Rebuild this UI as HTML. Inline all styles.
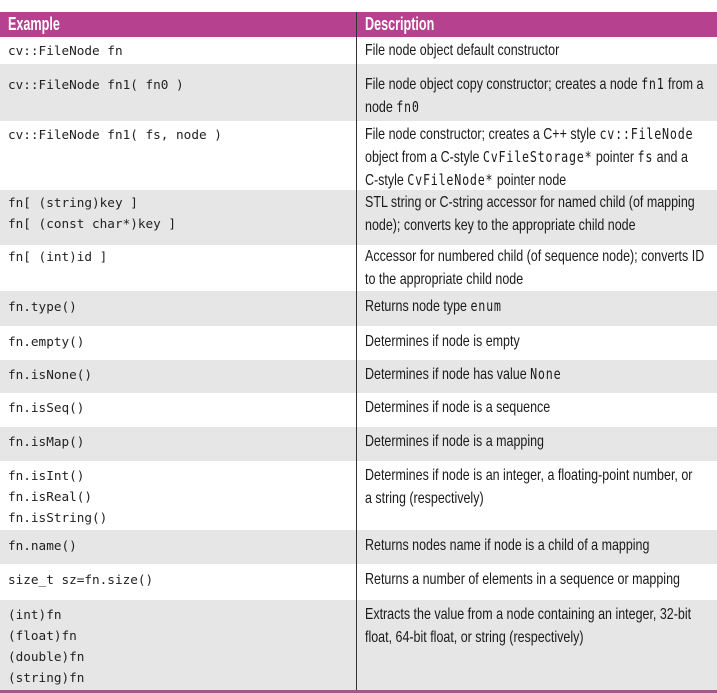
<!DOCTYPE html><html><head><style>
body{margin:0;width:717px;height:693px;position:relative;overflow:hidden;background:#fff;font-family:"Liberation Sans",sans-serif;color:#222}
.r{position:absolute;left:0;width:717px}
.g{background:#e6e6e6}
.c{position:absolute;left:8px;font-family:"DejaVu Sans Mono","Liberation Mono",monospace;font-size:12.7px;line-height:21px;white-space:pre;color:#222}
.d{position:absolute;left:365px;font-size:16px;line-height:23px;white-space:pre;transform:scaleX(0.78);transform-origin:0 0;color:#1a1a1a}
.d code{font-family:"DejaVu Sans Mono",monospace;font-size:15px;letter-spacing:1px}
.h{background:#b5418f;top:12px;height:25px;color:#fff;font-weight:bold}
.h span{position:absolute;top:2px;font-size:18px;transform:scaleX(0.7);transform-origin:0 0}
#v{position:absolute;left:356px;top:12px;width:1px;height:678px;background:#333}
</style></head><body>
<div class="r h"><span style="left:8px">Example</span><span style="left:365px">Description</span></div>
<div class="r" style="top:37px;height:27px"><div class="c" style="top:3px">cv::FileNode fn</div><div class="d" style="top:2px">File node object default constructor</div></div>
<div class="r g" style="top:64px;height:57px"><div class="c" style="top:10px">cv::FileNode fn1( fn0 )</div><div class="d" style="top:9px">File node object copy constructor; creates a node <code>fn1</code> from a
node <code>fn0</code></div></div>
<div class="r" style="top:121px;height:69px"><div class="c" style="top:3px">cv::FileNode fn1( fs, node )</div><div class="d" style="top:2px">File node constructor; creates a C++ style <code>cv::FileNode</code>
object from a C-style <code>CvFileStorage*</code> pointer <code>fs</code> and a
C-style <code>CvFileNode*</code> pointer node</div></div>
<div class="r g" style="top:190px;height:55px"><div class="c" style="top:2px">fn[ (string)key ]
fn[ (const char*)key ]</div><div class="d" style="top:1px">STL string or C-string accessor for named child (of mapping
node); converts key to the appropriate child node</div></div>
<div class="r" style="top:245px;height:46px"><div class="c" style="top:1px">fn[ (int)id ]</div><div class="d" style="top:0px">Accessor for numbered child (of sequence node); converts ID
to the appropriate child node</div></div>
<div class="r g" style="top:291px;height:35px"><div class="c" style="top:5px">fn.type()</div><div class="d" style="top:4px">Returns node type <code>enum</code></div></div>
<div class="r" style="top:326px;height:34px"><div class="c" style="top:5px">fn.empty()</div><div class="d" style="top:4px">Determines if node is empty</div></div>
<div class="r g" style="top:360px;height:33px"><div class="c" style="top:4px">fn.isNone()</div><div class="d" style="top:3px">Determines if node has value <code>None</code></div></div>
<div class="r" style="top:393px;height:34px"><div class="c" style="top:4px">fn.isSeq()</div><div class="d" style="top:3px">Determines if node is a sequence</div></div>
<div class="r g" style="top:427px;height:34px"><div class="c" style="top:4px">fn.isMap()</div><div class="d" style="top:3px">Determines if node is a mapping</div></div>
<div class="r" style="top:461px;height:69px"><div class="c" style="top:4px">fn.isInt()
fn.isReal()
fn.isString()</div><div class="d" style="top:3px">Determines if node is an integer, a floating-point number, or
a string (respectively)</div></div>
<div class="r g" style="top:530px;height:34px"><div class="c" style="top:5px">fn.name()</div><div class="d" style="top:4px">Returns nodes name if node is a child of a mapping</div></div>
<div class="r" style="top:564px;height:36px"><div class="c" style="top:5px">size_t sz=fn.size()</div><div class="d" style="top:4px">Returns a number of elements in a sequence or mapping</div></div>
<div class="r g" style="top:600px;height:90px"><div class="c" style="top:4px">(int)fn
(float)fn
(double)fn
(string)fn</div><div class="d" style="top:3px">Extracts the value from a node containing an integer, 32-bit
float, 64-bit float, or string (respectively)</div></div>
<div class="r" style="top:690px;height:3px;background:#a05a8a"></div>
<div id="v"></div>
</body></html>
